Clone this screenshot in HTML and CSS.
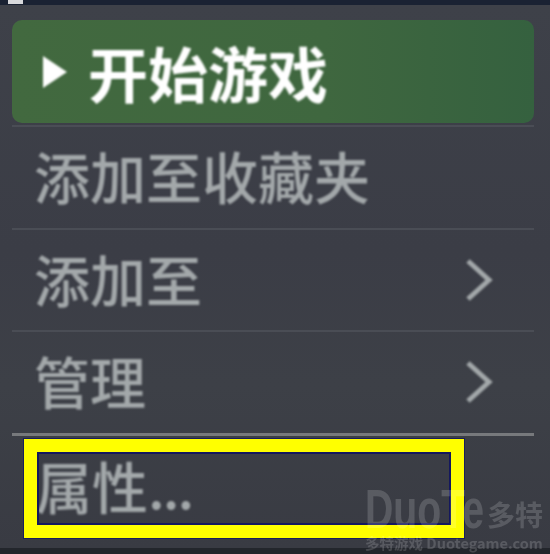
FILE: index.html
```html
<!DOCTYPE html>
<html lang="zh-CN">
<head>
    <meta charset="UTF-8">
    <meta name="viewport" content="width=device-width, initial-scale=1.0">
    <title>开始游戏</title>
    <link rel="stylesheet" href="styles.css">
</head>
<body>
    <div class="top-bar"><span class="top-tab"></span></div>

    <div class="menu">
        <div class="play-button">
            <svg class="play-icon" width="26" height="34" viewBox="0 0 26 34">
                <polygon points="1,1 25,17 1,33" fill="#ffffff"/>
            </svg>
            <span class="play-label">开始游戏</span>
        </div>
        <div class="menu-item item-first"><span class="label">添加至收藏夹</span></div>
        <div class="menu-item">
            <span class="label">添加至</span>
            <svg class="arrow" width="28" height="42" viewBox="0 0 28 42">
                <polyline points="3,2 24,21 3,40" fill="none" stroke="#a3a8aa" stroke-width="5"/>
            </svg>
        </div>
        <div class="menu-item">
            <span class="label">管理</span>
            <svg class="arrow" width="28" height="42" viewBox="0 0 28 42">
                <polyline points="3,2 24,21 3,40" fill="none" stroke="#a3a8aa" stroke-width="5"/>
            </svg>
        </div>
        <div class="menu-item item-last"><span class="label">属性<span class="dots">...</span></span></div>
    </div>

    <!-- annotation and watermark sit on top of the screenshot -->
    <div class="highlight"></div>
    <div class="watermark">
        <div class="wm-top"><span class="wm-logo">DuoTe</span><span class="wm-name">多特</span></div>
        <div class="wm-sub">多特游戏 Duotegame.com</div>
    </div>
</body>
</html>
```

FILE: styles.css
```css
html, body {
    margin: 0;
    padding: 0;
}
body {
    width: 550px;
    height: 554px;
    overflow: hidden;
    position: relative;
    background: #23262c;
    font-family: "Noto Sans CJK SC", "Liberation Sans", sans-serif;
}
.top-bar {
    height: 5px;
    background: #1a2233;
}
.top-tab {
    display: block;
    width: 15px;
    height: 4px;
    margin-left: 8px;
    background: #d8d9dc;
}
.menu {
    height: 543px;
    box-sizing: border-box;
    padding: 15px 16px 0 12px;
    background: linear-gradient(180deg, #3e4149 0%, #3b3d46 45%, #3d4047 70%, #393b43 100%);
}
.play-button {
    display: flex;
    align-items: center;
    height: 103px;
    padding-left: 30px;
    border-radius: 10px;
    background: linear-gradient(90deg, #42693f 0%, #3f673f 60%, #35613f 100%);
}
.play-icon {
    margin-right: 20px;
    filter: blur(1px);
}
.play-label {
    font-size: 60px;
    line-height: 1;
    font-weight: 700;
    color: #ffffff;
    filter: blur(1px);
}
.menu-item {
    display: flex;
    align-items: center;
    justify-content: space-between;
    height: 100.5px;
    padding: 0 41px 0 22px;
    border-top: 2px solid #4a4d55;
}
.item-first {
    margin-top: 2px;
}
.item-last {
    height: 108px;
    border-top: 3px solid #77797c;
    align-items: flex-start;
    padding-left: 24px;
}
.item-last .label {
    margin-top: 21px;
}
.label {
    margin-top: -4px;
    font-size: 56px;
    line-height: 1;
    font-weight: 500;
    color: #a3a8aa;
    filter: blur(1px);
}
.dots {
    letter-spacing: -2px;
}
.arrow {
    filter: blur(1px);
}
.highlight {
    position: absolute;
    left: 24px;
    top: 439px;
    width: 414px;
    height: 73px;
    border: 13px solid #ffff00;
    outline: 1px solid #1a1f5c;
    box-shadow: inset 0 0 0 2px #14185e;
}
.watermark {
    position: absolute;
    left: 365px;
    top: 482px;
    width: 185px;
    color: rgba(255, 255, 255, 0.16);
    font-weight: 700;
    filter: blur(0.7px);
}
.wm-top {
    display: flex;
    align-items: center;
    height: 54px;
}
.wm-logo {
    display: block;
    width: 122px;
    font-family: "Liberation Sans", sans-serif;
    font-size: 56px;
    line-height: 50px;
    transform: scaleX(0.7);
    transform-origin: left center;
}
.wm-name {
    font-size: 28px;
    line-height: 1;
    margin-top: 10px;
    white-space: nowrap;
}
.wm-sub {
    font-size: 14.5px;
    line-height: 1;
    white-space: nowrap;
}
```
